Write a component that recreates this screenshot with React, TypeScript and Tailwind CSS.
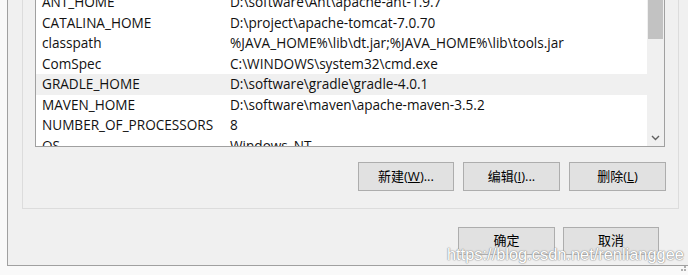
import React from 'react';

interface EnvVar {
    name: string;
    value: string;
}

const vars: EnvVar[] = [
    { name: 'ANT_HOME', value: 'D:\\software\\Ant\\apache-ant-1.9.7' },
    { name: 'CATALINA_HOME', value: 'D:\\project\\apache-tomcat-7.0.70' },
    { name: 'classpath', value: '%JAVA_HOME%\\lib\\dt.jar;%JAVA_HOME%\\lib\\tools.jar' },
    { name: 'ComSpec', value: 'C:\\WINDOWS\\system32\\cmd.exe' },
    { name: 'GRADLE_HOME', value: 'D:\\software\\gradle\\gradle-4.0.1' },
    { name: 'MAVEN_HOME', value: 'D:\\software\\maven\\apache-maven-3.5.2' },
    { name: 'NUMBER_OF_PROCESSORS', value: '8' },
    { name: 'OS', value: 'Windows_NT' },
];

const font = { fontFamily: '"Open Sans", "Noto Sans CJK SC", sans-serif' };

const Button = ({ children, className }: { children: React.ReactNode; className: string }) => (
    <button
        className={`flex items-center justify-center border border-[#adadad] bg-[#e1e1e1] text-[13px] text-black ${className}`}
        style={font}
    >
        {children}
    </button>
);

export default function App() {
    return (
        <div className="relative w-[688px] h-[275px] overflow-hidden bg-[#f9f9f9]" style={font}>
            <div className="ml-[7px] w-[681px] h-[266px] border-l border-b border-[#a0a0a0] bg-[#f0f0f0]">
                {/* group box */}
                <div className="ml-[14px] w-[657px] h-[209px] border-l border-r border-b border-[#dcdcdc]">
                    <div className="ml-[12px] w-[630px] h-[147px] flex border-l border-r border-b border-[#a0a0a0] bg-white overflow-hidden">
                        <div className="flex-1 overflow-hidden">
                            <div className="-mt-[8px]">
                                {vars.map((v) => (
                                    <div
                                        key={v.name}
                                        className={`flex items-center h-[20.5px] text-[13.6px] text-[#111] whitespace-nowrap ${v.name === 'GRADLE_HOME' ? 'bg-[#f0f0f0]' : ''}`}
                                    >
                                        <span className="pl-[6px] w-[194px]">{v.name}</span>
                                        <span>{v.value}</span>
                                    </div>
                                ))}
                            </div>
                        </div>
                        {/* scrollbar */}
                        <div className="w-[17px] flex flex-col bg-[#f0f0f0]">
                            <div className="h-[39px] bg-[#c2c2c2] mx-[1px]"></div>
                            <div className="flex-1"></div>
                            <div className="h-[17px] flex items-center justify-center">
                                <svg width="9" height="6" viewBox="0 0 9 6">
                                    <path d="M1 1 L4.5 4.5 L8 1" fill="none" stroke="#606060" strokeWidth="1.4" />
                                </svg>
                            </div>
                        </div>
                    </div>
                    <div className="flex justify-end gap-[9px] pr-[12px] mt-[15px]">
                        <Button className="w-[96px] h-[29px]">
                            新建(<span className="underline">W</span>)...
                        </Button>
                        <Button className="w-[97px] h-[29px]">
                            编辑(<span className="underline">I</span>)...
                        </Button>
                        <Button className="w-[97px] h-[29px]">
                            删除(<span className="underline">L</span>)
                        </Button>
                    </div>
                </div>
                <div className="flex justify-end gap-[8px] pr-[29px] mt-[18px]">
                    <Button className="w-[97px] h-[28px]">确定</Button>
                    <Button className="w-[96px] h-[28px]">取消</Button>
                </div>
            </div>
            <div
                className="absolute left-[447px] top-[242px] text-[16.4px] text-white whitespace-nowrap"
                style={{
                    fontFamily: '"Liberation Sans", sans-serif',
                    textShadow: '0 0 1px #8c8c8c, 0 0 1px #8c8c8c, 0 0 2px #b0b0b0',
                }}
            >
                https://blog.csdn.net/renlianggee
            </div>
            <div className="absolute right-[2px] bottom-[4px] grid grid-cols-2 gap-[1px]">
                <span className="w-[2px] h-[2px]"></span>
                <span className="w-[2px] h-[2px] bg-[#b0b0b0]"></span>
                <span className="w-[2px] h-[2px] bg-[#b0b0b0]"></span>
                <span className="w-[2px] h-[2px] bg-[#b0b0b0]"></span>
            </div>
        </div>
    );
}
